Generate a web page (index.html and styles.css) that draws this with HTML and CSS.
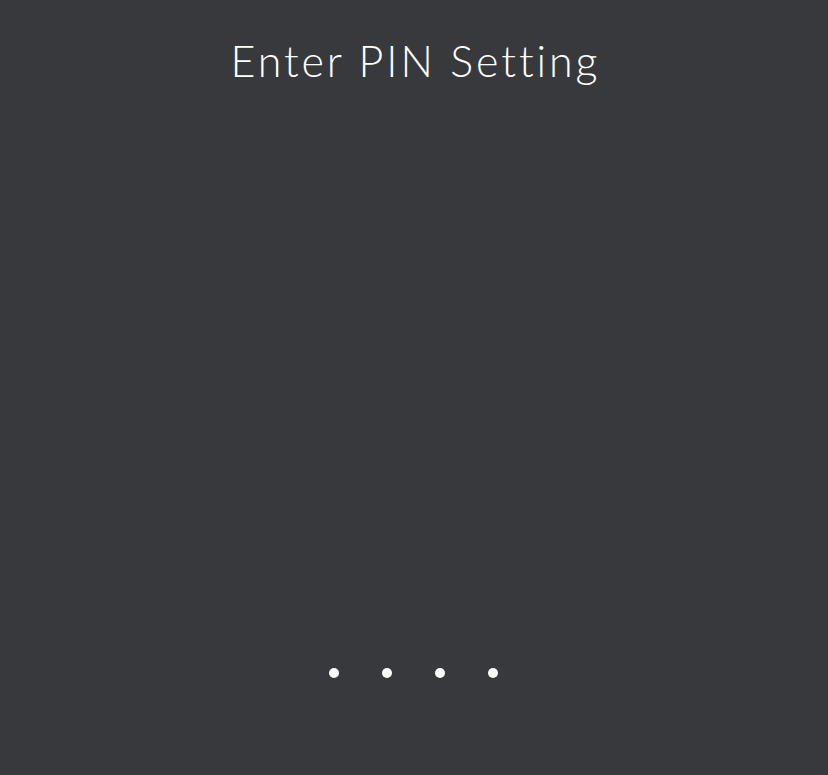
FILE: index.html
```html
<!DOCTYPE html>
<html lang="en">

<head>
  <meta charset="UTF-8" />
  <meta name="viewport" content="width=device-width, initial-scale=1.0" />
  <title>Enter PIN Setting</title>
  <link rel="stylesheet" href="styles.css">
</head>

<body>
  <div class="pin-screen">
    <h1 class="pin-title">Enter PIN Setting</h1>

    <div class="pin-dots">
      <span class="dot"></span>
      <span class="dot"></span>
      <span class="dot"></span>
      <span class="dot"></span>
    </div>
  </div>
</body>

</html>
```

FILE: styles.css
```css
body {
  margin: 0;
  background-color: #38393d;
  font-family: 'Lato', 'Open Sans', sans-serif;
  color: #fff;
}

.pin-screen {
  height: 775px;
  display: flex;
  flex-direction: column;
  align-items: center;
  justify-content: space-between;
  box-sizing: border-box;
  padding: 35px 0 97px;
}

.pin-title {
  margin: 0 0 0 3px;
  font-size: 43px;
  font-weight: 300;
  line-height: 1.2;
  letter-spacing: 2.9px;
}

/* 입력된 PIN 표시 */
.pin-dots {
  display: flex;
  gap: 43px;
  margin-left: -2px;
}

.dot {
  width: 10px;
  height: 10px;
  border-radius: 50%;
  background-color: #fff;
}
```
